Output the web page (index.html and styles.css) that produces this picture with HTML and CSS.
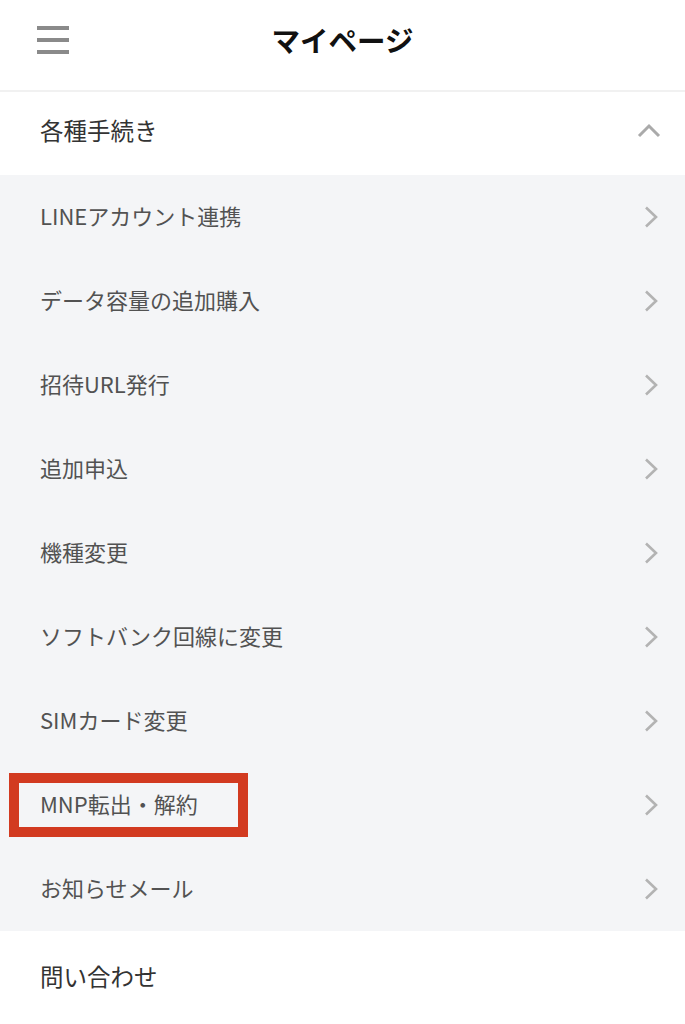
FILE: index.html
```html
<!DOCTYPE html>
<html lang="ja">
<head>
<meta charset="utf-8">
<title>マイページ</title>
<link rel="stylesheet" href="styles.css">
</head>
<body>
<header class="topbar">
  <span class="burger"><i></i><i></i><i></i></span>
  <h1 class="title">マイページ</h1>
</header>
<section class="section">
  <div class="section-head">
    <span>各種手続き</span>
    <svg class="chev-up" width="24" height="16" viewBox="0 0 24 16"><path d="M2 13 L12 3 L22 13" fill="none" stroke="#aaa" stroke-width="3"/></svg>
  </div>
  <ul class="list">
    <li class="item"><span>LINEアカウント連携</span><svg class="chev" width="16" height="22" viewBox="0 0 16 22"><path d="M3 1.5 L13 11 L3 20.5" fill="none" stroke="#b3b3b3" stroke-width="2.6"/></svg></li>
    <li class="item"><span>データ容量の追加購入</span><svg class="chev" width="16" height="22" viewBox="0 0 16 22"><path d="M3 1.5 L13 11 L3 20.5" fill="none" stroke="#b3b3b3" stroke-width="2.6"/></svg></li>
    <li class="item"><span>招待URL発行</span><svg class="chev" width="16" height="22" viewBox="0 0 16 22"><path d="M3 1.5 L13 11 L3 20.5" fill="none" stroke="#b3b3b3" stroke-width="2.6"/></svg></li>
    <li class="item"><span>追加申込</span><svg class="chev" width="16" height="22" viewBox="0 0 16 22"><path d="M3 1.5 L13 11 L3 20.5" fill="none" stroke="#b3b3b3" stroke-width="2.6"/></svg></li>
    <li class="item"><span>機種変更</span><svg class="chev" width="16" height="22" viewBox="0 0 16 22"><path d="M3 1.5 L13 11 L3 20.5" fill="none" stroke="#b3b3b3" stroke-width="2.6"/></svg></li>
    <li class="item"><span>ソフトバンク回線に変更</span><svg class="chev" width="16" height="22" viewBox="0 0 16 22"><path d="M3 1.5 L13 11 L3 20.5" fill="none" stroke="#b3b3b3" stroke-width="2.6"/></svg></li>
    <li class="item"><span>SIMカード変更</span><svg class="chev" width="16" height="22" viewBox="0 0 16 22"><path d="M3 1.5 L13 11 L3 20.5" fill="none" stroke="#b3b3b3" stroke-width="2.6"/></svg></li>
    <li class="item marked"><span>MNP転出・解約</span><svg class="chev" width="16" height="22" viewBox="0 0 16 22"><path d="M3 1.5 L13 11 L3 20.5" fill="none" stroke="#b3b3b3" stroke-width="2.6"/></svg><span class="highlight"></span></li>
    <li class="item"><span>お知らせメール</span><svg class="chev" width="16" height="22" viewBox="0 0 16 22"><path d="M3 1.5 L13 11 L3 20.5" fill="none" stroke="#b3b3b3" stroke-width="2.6"/></svg></li>
  </ul>
  <div class="section-head plain"><span>問い合わせ</span></div>
</section>
</body>
</html>
```
FILE: styles.css
```css
* { box-sizing: border-box; }
html, body { margin: 0; padding: 0; }
body {
  width: 685px;
  background: #fff;
  font-family: "Noto Sans CJK JP", "Noto Sans", sans-serif;
  color: #4a4a4a;
  overflow: hidden;
}
.topbar {
  height: 92px;
  display: flex;
  align-items: center;
  justify-content: center;
  position: relative;
  border-bottom: 2px solid #f1f1f1;
}
.burger {
  position: absolute;
  left: 37px;
  top: 26px;
  width: 32px;
  display: flex;
  flex-direction: column;
  gap: 8px;
}
.burger i {
  display: block;
  height: 4px;
  background: #8a8a8a;
}
.title {
  margin: 0;
  margin-top: -12px;
  font-size: 28.5px;
  font-weight: 700;
  color: #111;
  letter-spacing: 0;
}
.section-head {
  height: 83px;
  display: flex;
  align-items: center;
  justify-content: space-between;
  padding: 0 24px 8px 40px;
  font-size: 23.5px;
  color: #333;
}
.section-head.plain { height: 92px; padding-bottom: 2px; }
.chev-up { margin-top: 2px; }
.list {
  list-style: none;
  margin: 0;
  padding: 0;
  background: #f4f5f7;
}
.item {
  height: 84px;
  display: flex;
  align-items: center;
  justify-content: space-between;
  padding: 0 26px 0 40px;
  font-size: 22px;
  color: #525252;
  position: relative;
}
.item > span:first-child { margin-top: -5px; }
.chev { margin-top: 0; }
.highlight {
  position: absolute;
  left: 9px;
  top: 10px;
  width: 239px;
  height: 64px;
  border: 10px solid #d23a20;
}
```
